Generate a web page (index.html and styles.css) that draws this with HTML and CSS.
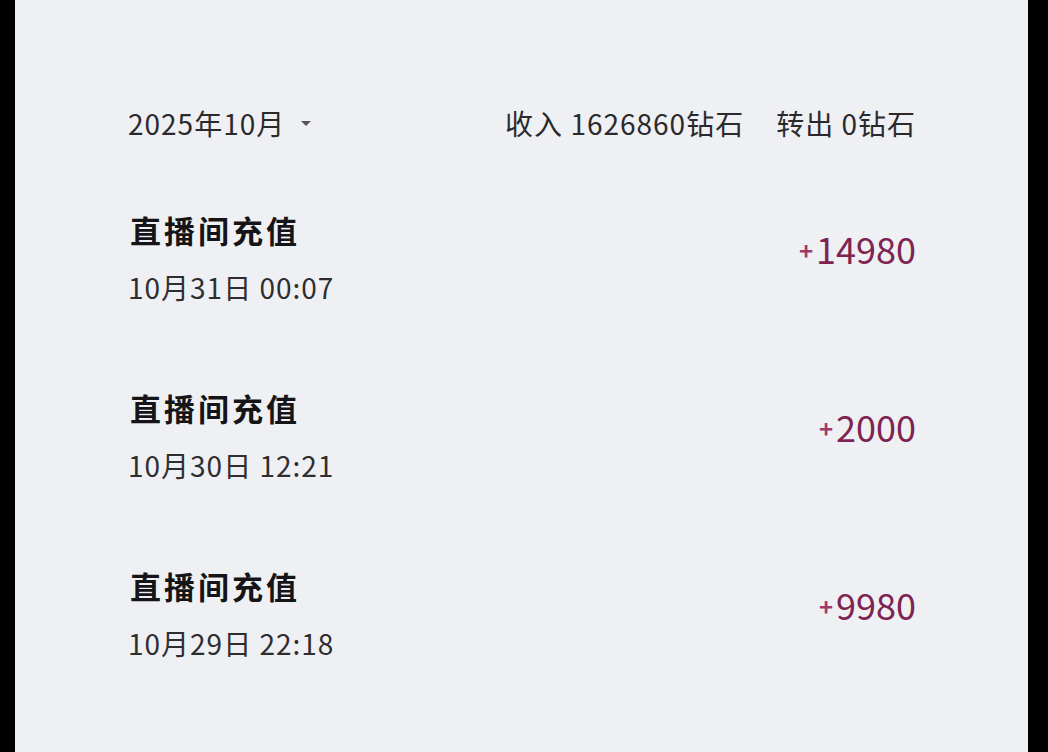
FILE: index.html
```html
<!DOCTYPE html>
<html lang="zh-CN">
<head>
<meta charset="utf-8">
<link rel="stylesheet" href="styles.css">
</head>
<body>
<div class="screen">
  <div class="header">
    <div class="month">2025年10月<span class="caret"></span></div>
    <div class="summary">
      <span>收入 1626860钻石</span>
      <span>转出 0钻石</span>
    </div>
  </div>
  <div class="list">
    <div class="row">
      <div class="info">
        <div class="title">直播间充值</div>
        <div class="date">10月31日 00:07</div>
      </div>
      <div class="amount"><span class="plus">+</span>14980</div>
    </div>
    <div class="row">
      <div class="info">
        <div class="title">直播间充值</div>
        <div class="date">10月30日 12:21</div>
      </div>
      <div class="amount"><span class="plus">+</span>2000</div>
    </div>
    <div class="row">
      <div class="info">
        <div class="title">直播间充值</div>
        <div class="date">10月29日 22:18</div>
      </div>
      <div class="amount"><span class="plus">+</span>9980</div>
    </div>
  </div>
</div>
</body>
</html>
```
FILE: styles.css
```css
html, body {
  margin: 0;
  padding: 0;
  background: #000;
  height: 752px;
  overflow: hidden;
}
.screen {
  margin: 0 20px 0 15px;
  height: 752px;
  background: #eff0f4;
  box-sizing: border-box;
  padding: 91px 112px 0 113px;
  font-family: "Noto Sans CJK SC", "Noto Sans", sans-serif;
  color: #1c1c1e;
}
.header {
  height: 64px;
  display: flex;
  align-items: center;
  justify-content: space-between;
  font-size: 28px;
  letter-spacing: 1px;
  color: #2a2a2c;
}
.month {
  display: flex;
  align-items: center;
}
.caret {
  width: 0;
  height: 0;
  border-left: 5px solid transparent;
  border-right: 5px solid transparent;
  border-top: 5px solid #555;
  margin-left: 16px;
}
.summary {
  display: flex;
  gap: 32px;
}
.list {
  margin-top: 13px;
}
.row {
  height: 178px;
  display: flex;
  align-items: center;
  justify-content: space-between;
}
.info {
  display: flex;
  flex-direction: column;
  padding-left: 2px;
}
.title {
  font-size: 31px;
  line-height: 40px;
  font-weight: 700;
  letter-spacing: 3px;
  color: #151517;
}
.date {
  margin-top: 20px;
  margin-left: -2px;
  font-size: 28px;
  line-height: 34px;
  letter-spacing: 1px;
  color: #2e2e30;
}
.amount {
  font-size: 36px;
  line-height: 40px;
  color: #7e2452;
  margin-bottom: 16px;
}
.plus {
  display: inline-block;
  font-size: 24px;
  font-weight: 700;
  color: #a3396a;
  vertical-align: 4px;
  margin-right: 3px;
}
```
